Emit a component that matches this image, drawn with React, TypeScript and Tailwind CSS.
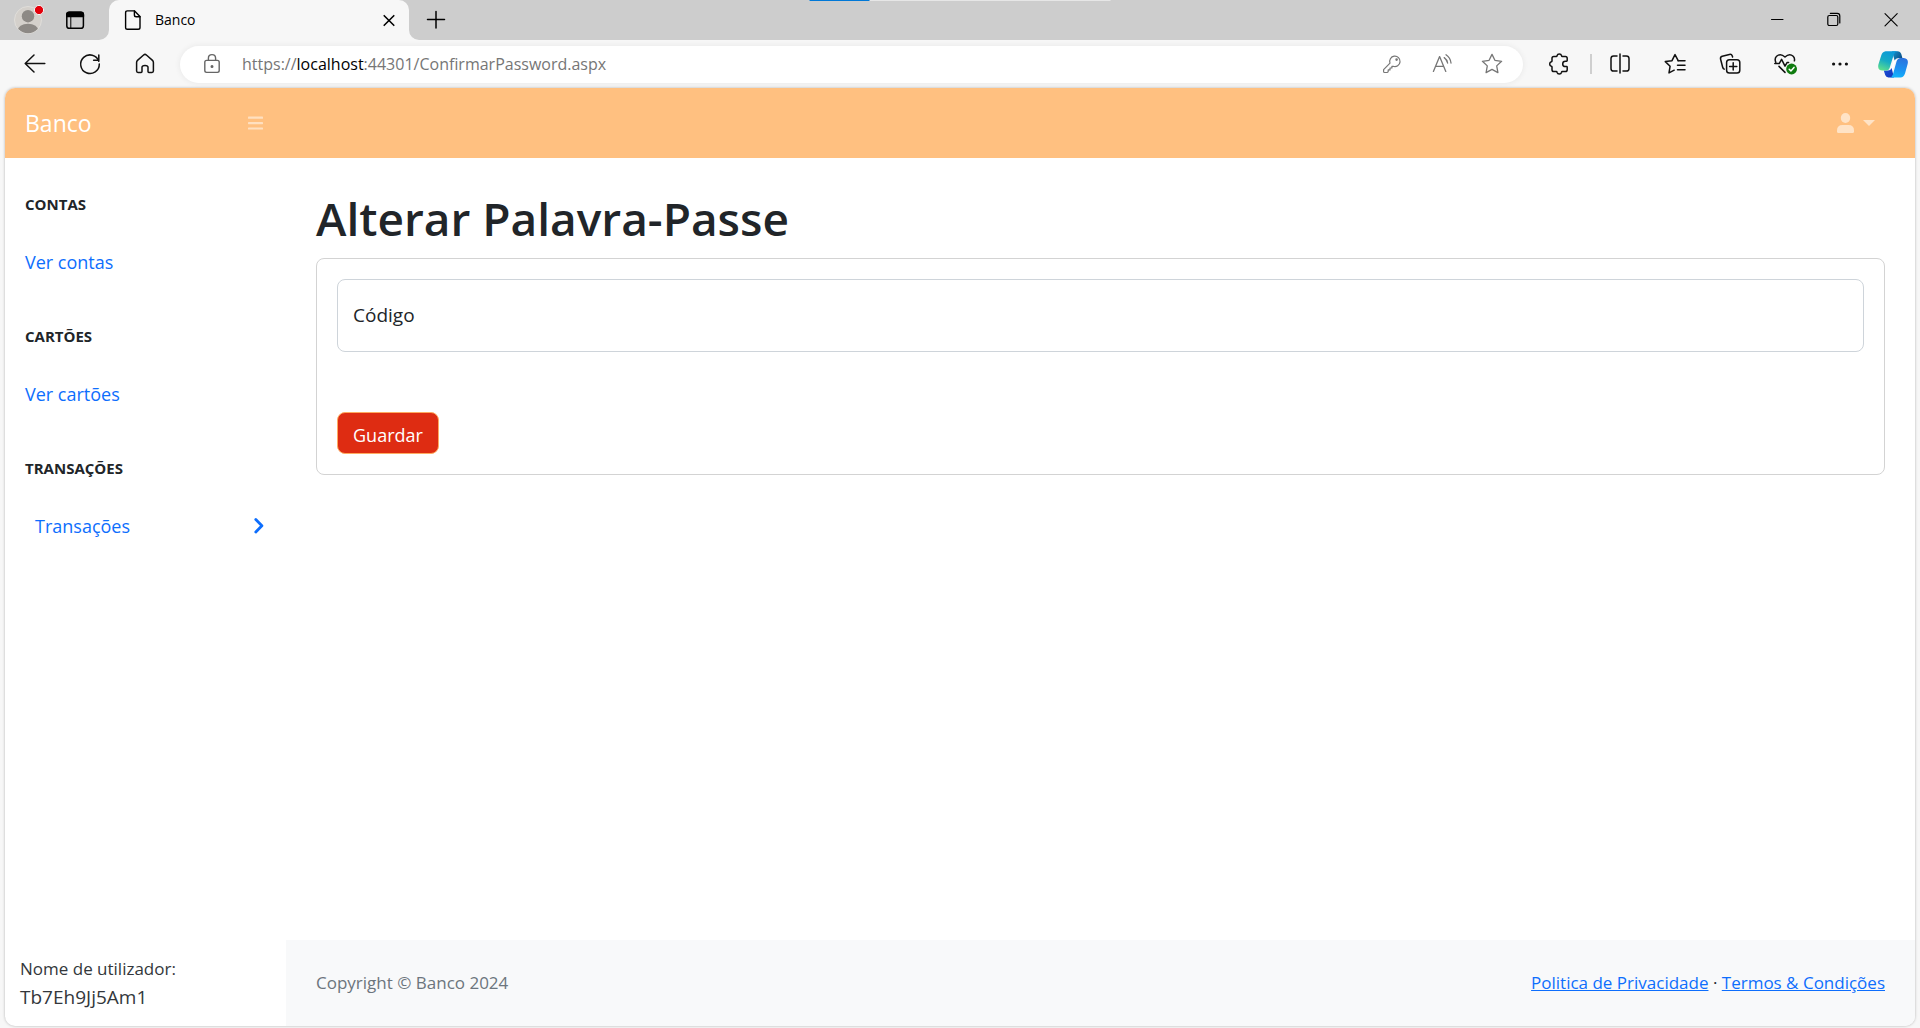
import type { ReactNode } from "react";

function Icon({ size = 24, width = 1.3, children }: { size?: number; width?: number; children: ReactNode }) {
  return (
    <svg
      width={size}
      height={size}
      viewBox={`0 0 ${size} ${size}`}
      fill="none"
      stroke="currentColor"
      strokeWidth={width}
      strokeLinecap="round"
      strokeLinejoin="round"
      aria-hidden="true"
      className="shrink-0"
    >
      {children}
    </svg>
  );
}

function ToolButton({ label, children }: { label: string; children: ReactNode }) {
  return (
    <button type="button" aria-label={label} className="flex h-9 w-[55px] shrink-0 items-center justify-center">
      {children}
    </button>
  );
}

function FieldButton({ label, children }: { label: string; children: ReactNode }) {
  return (
    <button type="button" aria-label={label} className="flex h-full w-[50px] shrink-0 items-center justify-center text-[#767676]">
      {children}
    </button>
  );
}

function WindowButton({ label, children }: { label: string; children: ReactNode }) {
  return (
    <button type="button" aria-label={label} className="flex h-full w-[57px] items-center justify-center">
      {children}
    </button>
  );
}

function TabFlare({ flip = false }: { flip?: boolean }) {
  return (
    <svg width="10" height="10" viewBox="0 0 10 10" aria-hidden="true" className={flip ? "-scale-x-100" : ""}>
      <path d="M10 0V10H0A10 10 0 0 0 10 0Z" fill="#f7f7f7" />
    </svg>
  );
}

function TitleBar() {
  return (
    <div className="relative flex h-10 bg-[#cdcdcd] text-black">
      <div className="absolute top-0 left-1/2 flex h-px w-[301px] -translate-x-1/2 bg-[#e6e6e6]">
        <div className="w-[60px] bg-[#0078d7]" />
      </div>
      <div className="flex w-[99px] items-center gap-[21px] pl-[14px]">
        <button type="button" aria-label="Perfil">
          <svg width="30" height="30" viewBox="0 0 30 30" aria-hidden="true">
            <clipPath id="avatar">
              <circle cx="14" cy="15" r="13.2" />
            </clipPath>
            <circle cx="14" cy="15" r="13.5" fill="#d4d0cb" stroke="#e0deda" strokeWidth="1" />
            <g clipPath="url(#avatar)" fill="#8d8985">
              <circle cx="14" cy="11.2" r="6.2" />
              <ellipse cx="14" cy="26" rx="10.5" ry="7.3" />
            </g>
            <circle cx="25" cy="5" r="4.6" fill="#e3000b" stroke="#f3f3f3" strokeWidth="1" />
          </svg>
        </button>
        <button type="button" aria-label="Espaços de trabalho">
          <Icon size={20} width={1.5}>
            <rect x="1.8" y="2.3" width="16.6" height="16" rx="2.6" />
            <path d="M1.8 6.5V4.6Q1.8 2.3 4.4 2.3H15.8Q18.4 2.3 18.4 4.6V6.5Z" fill="currentColor" />
            <path d="M5.8 6.5V18" strokeWidth="1" />
          </Icon>
        </button>
      </div>
      <div className="flex items-end">
        <TabFlare />
        <div className="flex h-10 w-[300px] items-center rounded-t-[10px] bg-[#f7f7f7] pr-[10px] pl-[14px]">
          <Icon size={20} width={1.4}>
            <path d="M4.4 0.9H11.6L17 6.4V17.4Q17 19.2 15.2 19.2H4.4Q2.6 19.2 2.6 17.4V2.7Q2.6 0.9 4.4 0.9Z" />
            <path d="M11.4 1V4.9Q11.4 6.7 13.2 6.7H17" />
          </Icon>
          <span className="ml-3 flex-1 text-sm">Banco</span>
          <button type="button" aria-label="Fechar separador">
            <Icon size={20} width={1.6}>
              <path d="M5.2 5.7L14.8 15.3M14.8 5.7L5.2 15.3" />
            </Icon>
          </button>
        </div>
        <TabFlare flip />
        <button type="button" aria-label="Novo separador" className="flex h-full w-[34px] items-center justify-center">
          <Icon size={20} width={1.5}>
            <path d="M10 1.5V18M1.5 9.5H18.5" />
          </Icon>
        </button>
      </div>
      <div className="ml-auto flex">
        <WindowButton label="Minimizar">
          <Icon size={16} width={1}>
            <path d="M1.5 7.5H13" />
          </Icon>
        </WindowButton>
        <WindowButton label="Restaurar">
          <Icon size={16} width={1.2}>
            <rect x="0.8" y="3.5" width="10" height="10" rx="1.5" />
            <path d="M3.4 1.4H10.2Q12.8 1.4 12.8 4V11" />
          </Icon>
        </WindowButton>
        <WindowButton label="Fechar">
          <Icon size={16} width={1.1}>
            <path d="M1 1.6L13.2 13.8M13.2 1.6L1 13.8" />
          </Icon>
        </WindowButton>
      </div>
    </div>
  );
}

function Copilot() {
  return (
    <svg width="30" height="27" viewBox="0 0 30 27" aria-hidden="true">
      <defs>
        <linearGradient id="cpLeft" x1="0.6" y1="0" x2="0.2" y2="1">
          <stop offset="0" stopColor="#0a98d8" />
          <stop offset="0.5" stopColor="#16abc5" />
          <stop offset="1" stopColor="#5fe08b" />
        </linearGradient>
        <linearGradient id="cpRight" x1="0.6" y1="0" x2="0.4" y2="1">
          <stop offset="0" stopColor="#2b72dd" />
          <stop offset="0.6" stopColor="#1a93f2" />
          <stop offset="1" stopColor="#12b4fb" />
        </linearGradient>
        <linearGradient id="cpTop" x1="0" y1="0" x2="1" y2="0.6">
          <stop offset="0" stopColor="#1297d2" />
          <stop offset="1" stopColor="#0d4f88" />
        </linearGradient>
        <linearGradient id="cpBottom" x1="0" y1="0" x2="1" y2="0.6">
          <stop offset="0" stopColor="#1b4fd8" />
          <stop offset="1" stopColor="#1339bd" />
        </linearGradient>
      </defs>
      <path d="M12.6 19.2L16.4 7.4H18.4L14.4 19.2Z" fill="#fff" />
      <path d="M14 0.2H20Q22.4 0.3 23.2 2.8L24.4 6.9H20.4Q17.6 7 16.6 9.6Z" fill="url(#cpTop)" />
      <path d="M16 26.6H10.4Q8 26.4 7.2 24L5.8 19.6H10Q12.6 19.6 13.6 17Z" fill="url(#cpBottom)" />
      <path d="M7.6 0.2H19.4Q16.8 0.4 15.8 3.4L11.8 16.4Q10.8 19.6 7.6 19.6H4.4Q-0.8 19.4 0.4 13.6L3.2 4.4Q4.4 0.5 7.6 0.2Z" fill="url(#cpLeft)" />
      <path d="M22.6 26.6H11.6Q14 26.2 14.9 23.4L18.6 10.2Q19.6 7 22.6 6.9H25.8Q30.8 7.3 29.7 12.8L27 22.4Q25.6 26.4 22.6 26.6Z" fill="url(#cpRight)" />
    </svg>
  );
}

function Toolbar() {
  return (
    <div className="flex h-12 items-center bg-[#f7f7f7] pl-[7px] text-[#111]">
      <ToolButton label="Voltar">
        <Icon width={1.5}>
          <path d="M21.8 11.5H2.5M11 3L2.2 11.5L11 20" />
        </Icon>
      </ToolButton>
      <ToolButton label="Atualizar">
        <Icon width={1.5}>
          <path d="M20.8 9.2A9.3 9.3 0 1 0 21.3 12" />
          <path d="M20.8 3V8.2H15.6" />
        </Icon>
      </ToolButton>
      <ToolButton label="Página inicial">
        <Icon width={1.5}>
          <path d="M3.6 10.4Q3.6 9.2 4.5 8.4L10.6 3Q12 1.8 13.4 3L19.5 8.4Q20.4 9.2 20.4 10.4V19Q20.4 20.4 19 20.4H15.9Q15 20.4 15 19.5V15.2Q15 13.4 12 13.4Q9 13.4 9 15.2V19.5Q9 20.4 8.1 20.4H5Q3.6 20.4 3.6 19Z" />
        </Icon>
      </ToolButton>
      <div className="ml-2 flex h-[37px] min-w-0 flex-1 items-center rounded-full bg-white pr-[6px] pl-5 shadow-[0_0_6px_rgba(0,0,0,0.07)]">
        <span className="text-[#666]">
          <Icon width={1.4}>
            <rect x="4.8" y="8.4" width="14.4" height="12" rx="1.8" />
            <path d="M8.4 8.4V6.2Q8.4 2.6 12 2.6Q15.6 2.6 15.6 6.2V8.4" />
            <circle cx="12" cy="14.4" r="0.8" fill="currentColor" />
          </Icon>
        </span>
        <div className="ml-[18px] min-w-0 flex-1 truncate text-base text-[#767676]">
          https://<span className="text-black">localhost</span>:44301/ConfirmarPassword.aspx
        </div>
        <FieldButton label="Palavras-passe">
          <Icon width={1.2}>
            <path d="M10 11.2A5.2 5.2 0 1 1 13.2 14.3L11.9 14.3V16H10V17.9H8.2V19.4Q8 20.5 6.8 20.5H4.6Q3.6 20.5 3.6 19.4V17.7Z" />
            <circle cx="16.6" cy="7.6" r="0.7" fill="currentColor" />
          </Icon>
        </FieldButton>
        <FieldButton label="Ler em voz alta">
          <Icon width={1.3}>
            <path d="M3.4 19.4L9.6 4.6L15.8 19.4M5.6 14.4H13.6" />
            <path d="M14.2 5.6Q17 7.6 17.6 11M16 2.8Q20.4 5.8 21 11" />
          </Icon>
        </FieldButton>
        <FieldButton label="Adicionar aos favoritos">
          <Icon width={1.3}>
            <path d="M12 2.4L14.9 8.3L21.6 9.3L16.7 13.9L17.9 20.6L12 17.4L6.1 20.6L7.3 13.9L2.4 9.3L9.1 8.3Z" />
          </Icon>
        </FieldButton>
      </div>
      <div className="flex items-center">
        <div className="flex w-[67px] justify-center pl-1">
          <button type="button" aria-label="Extensões">
            <Icon width={1.5}>
              <path d="M6.8 4.4H9.3Q9.9 4.4 10 3.8A2.4 2.4 0 0 1 14.6 3.8Q14.7 4.4 15.3 4.4H18.4Q20.2 4.4 20.2 6.2V8.6Q20.2 9.2 19.6 9.2H18.4A2.7 2.7 0 0 0 18.4 14.6H19.6Q20.2 14.6 20.2 15.2V17.8Q20.2 19.6 18.4 19.6H15.3Q14.7 19.6 14.6 20.2A2.4 2.4 0 0 1 10 20.2Q9.9 19.6 9.3 19.6H6.8Q5 19.6 5 17.8V15Q5 14.4 4.4 14.3A2.4 2.4 0 0 1 4.4 9.7Q5 9.6 5 9V6.2Q5 4.4 6.8 4.4Z" />
            </Icon>
          </button>
        </div>
        <div className="h-5 w-0.5 bg-[#cfcfcf]" />
        <ToolButton label="Ecrã dividido">
          <Icon width={1.5}>
            <path d="M9 4H5.6Q3 4 3 6.6V16.4Q3 19 5.6 19H9M15 4H18.4Q21 4 21 6.6V16.4Q21 19 18.4 19H15M12 2V21" />
          </Icon>
        </ToolButton>
        <ToolButton label="Favoritos">
          <Icon width={1.5}>
            <path d="M15.2 8.6L12 2.6L9 8.7L2.3 9.6L7.1 14.2L6 20.9L11.2 18.2" />
            <path d="M15 8.8H22M14.5 13.3H22M14.5 17.8H22" />
          </Icon>
        </ToolButton>
        <ToolButton label="Coleções">
          <Icon width={1.5}>
            <path d="M6.2 17.2Q5 16.6 4.6 15L2.6 7.3Q2 5 4.2 4.3L11.4 2.4Q13.6 1.9 14.3 4L14.6 5" />
            <rect x="8.6" y="7.8" width="13.2" height="13.2" rx="2.8" />
            <path d="M15.2 10.8V18M11.6 14.4H18.8" />
          </Icon>
        </ToolButton>
        <ToolButton label="Desempenho">
          <Icon width={1.5}>
            <path d="M2.8 10.4Q1.2 6.6 3.6 4.2Q7.6 0.8 12 5Q16.4 0.8 20.2 4.2Q22 6.2 21.4 8.8M6 14.4L12 20.4" />
            <path d="M1.8 11.6H6.2L8.6 7.4L12 14.2L14.2 10.4H15.6" />
            <circle cx="18.6" cy="17" r="5.4" fill="#107c10" stroke="none" />
            <path d="M16.2 17.2L17.9 18.9L21 15.4" stroke="#fff" />
          </Icon>
        </ToolButton>
        <ToolButton label="Definições e mais">
          <svg width="24" height="24" viewBox="0 0 24 24" fill="currentColor" aria-hidden="true">
            <circle cx="5.6" cy="12" r="1.6" />
            <circle cx="12" cy="12" r="1.6" />
            <circle cx="18.4" cy="12" r="1.6" />
          </svg>
        </ToolButton>
        <button type="button" aria-label="Copilot" className="flex w-[53px] shrink-0 justify-center pr-px">
          <Copilot />
        </button>
      </div>
    </div>
  );
}

function SiteHeader() {
  return (
    <header className="flex h-[70px] items-center bg-[#ffc080]">
      <div className="flex w-[281px] items-center justify-between pr-[23px] pl-5">
        <a href="#inicio" className="text-[23px] text-white">
          Banco
        </a>
        <button type="button" aria-label="Mostrar ou ocultar menu" className="text-white/50">
          <svg width="15" height="14" viewBox="0 0 15 14" fill="currentColor" aria-hidden="true">
            <rect width="15" height="2.2" y="0.6" rx="0.6" />
            <rect width="15" height="2.2" y="6" rx="0.6" />
            <rect width="15" height="2.2" y="11.4" rx="0.6" />
          </svg>
        </button>
      </div>
      <button type="button" aria-label="Conta" className="mr-10 ml-auto flex items-center gap-[9px] text-white/55">
        <svg width="17" height="20" viewBox="0 0 17 20" fill="currentColor" aria-hidden="true">
          <ellipse cx="8.5" cy="5" rx="4.7" ry="5" />
          <path d="M0 18.5V17.5Q0 12 5.5 12H11.5Q17 12 17 17.5V18.5Q17 20 15.5 20H1.5Q0 20 0 18.5Z" />
        </svg>
        <svg width="12" height="6" viewBox="0 0 12 6" fill="currentColor" aria-hidden="true">
          <path d="M0 0H12L6 6Z" />
        </svg>
      </button>
    </header>
  );
}

function MenuHeading({ children }: { children: ReactNode }) {
  return <h2 className="px-5 pt-9 pb-5 text-[15px] leading-5 font-bold text-[#212529] uppercase">{children}</h2>;
}

function Sidebar() {
  return (
    <aside className="flex w-[281px] shrink-0 flex-col">
      <nav aria-label="Menu" className="flex-1 text-lg text-[#0d6efd]">
        <MenuHeading>Contas</MenuHeading>
        <a href="#contas" className="block px-5 py-4 leading-6">
          Ver contas
        </a>
        <MenuHeading>Cartões</MenuHeading>
        <a href="#cartoes" className="block px-5 py-4 leading-6">
          Ver cartões
        </a>
        <MenuHeading>Transações</MenuHeading>
        <a href="#transacoes" className="flex items-center justify-between py-4 pr-[21px] pl-[30px] leading-6">
          Transações
          <svg width="12" height="18" viewBox="0 0 12 18" fill="none" stroke="currentColor" strokeWidth="2.8" strokeLinecap="round" strokeLinejoin="round" aria-hidden="true">
            <path d="M2.8 2.6L8.9 8.8L2.8 15" />
          </svg>
        </a>
      </nav>
      <div className="px-[15px] py-[15px] text-[#33373b]">
        <div className="text-[17px] leading-7">Nome de utilizador:</div>
        <div className="text-[19px] leading-7">Tb7Eh9Jj5Am1</div>
      </div>
    </aside>
  );
}

export default function App() {
  return (
    <div className="flex min-h-screen flex-col bg-[#f7f7f7] font-['Open_Sans','Noto_Sans',sans-serif]">
      <TitleBar />
      <Toolbar />
      <div className="mx-[5px] mb-0.5 flex flex-1 flex-col overflow-hidden rounded-[10px] bg-white shadow-[0_0_3px_rgba(0,0,0,0.28)]">
        <SiteHeader />
        <div className="flex flex-1">
          <Sidebar />
          <div className="flex min-w-0 flex-1 flex-col">
            <main className="flex-1 px-[30px] pt-[30px]">
              <h1 className="mb-[10px] text-[46px] leading-[60px] font-semibold text-[#212529]">Alterar Palavra-Passe</h1>
              <form className="rounded-lg border border-[#d3d3d3] p-5" onSubmit={(event) => event.preventDefault()}>
                <div className="flex h-[73px] items-center rounded-lg border border-[#ced4da] px-[15px] text-[19px] text-[#212529]">
                  <label htmlFor="codigo">Código</label>
                  <input id="codigo" type="password" className="ml-2 h-full min-w-0 flex-1 bg-transparent outline-none" />
                </div>
                <button
                  type="submit"
                  className="mt-[60px] block rounded-lg border border-[#ffab60] bg-[#de2c12] px-[15px] pt-2 pb-1 text-lg leading-7 text-white"
                >
                  Guardar
                </button>
              </form>
            </main>
            <footer className="flex items-center justify-between bg-[#f8f9fa] px-[30px] py-[29px] text-[17px] leading-7">
              <div className="text-[#6c757d]">Copyright © Banco 2024</div>
              <div className="text-[#212529]">
                <a href="#privacidade" className="text-[#0d6efd] underline">
                  Politica de Privacidade
                </a>
                {" · "}
                <a href="#termos" className="text-[#0d6efd] underline">
                  Termos &amp; Condições
                </a>
              </div>
            </footer>
          </div>
        </div>
      </div>
    </div>
  );
}
